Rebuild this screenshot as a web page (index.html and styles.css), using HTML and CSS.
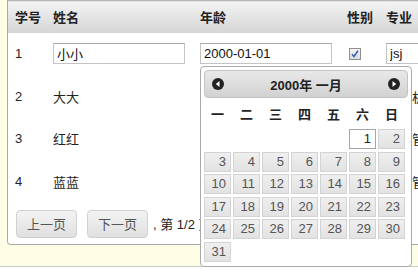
FILE: index.html
```html
<!DOCTYPE html>
<html lang="zh-CN">
<head>
    <meta charset="UTF-8">
    <title>学生列表</title>
    <link rel="stylesheet" href="styles.css">
</head>
<body>

    <div class="page">
        <div class="panel">
            <table class="grid">
                <colgroup>
                    <col class="c-id">
                    <col class="c-name">
                    <col class="c-age">
                    <col class="c-sex">
                    <col class="c-major">
                </colgroup>
                <thead>
                    <tr><th>学号</th><th>姓名</th><th>年龄</th><th>性别</th><th>专业</th></tr>
                </thead>
                <tbody>
                    <tr>
                        <td>1</td>
                        <td><input class="field" type="text" value="小小"></td>
                        <td><input class="field" type="text" value="2000-01-01"></td>
                        <td>
                            <span class="check">
                                <svg width="8" height="8" viewBox="0 0 8 8"><path d="M1 4.2 L3 6.5 L7 0.8" fill="none" stroke="#3a63b5" stroke-width="1.6"/></svg>
                            </span>
                        </td>
                        <td><input class="field" type="text" value="jsj"></td>
                    </tr>
                    <tr><td>2</td><td>大大</td><td></td><td></td><td>计算机</td></tr>
                    <tr><td>3</td><td>红红</td><td></td><td></td><td>工商管理</td></tr>
                    <tr><td>4</td><td>蓝蓝</td><td></td><td></td><td>工商管理</td></tr>
                </tbody>
            </table>
            <div class="pager">
                <button class="btn">上一页</button>
                <button class="btn">下一页</button>
                <span class="page-info">, 第 1/2 页</span>
            </div>
        </div>

        <!-- date picker popup for the 年龄 field -->
        <div class="datepicker">
            <div class="dp-head">
                <span class="dp-nav">
                    <svg width="12" height="12" viewBox="0 0 12 12"><circle cx="6" cy="6" r="6" fill="#222"/><path d="M7.5 3 L3.8 6 L7.5 9 Z" fill="#fff"/></svg>
                </span>
                <span class="dp-title">2000年 一月</span>
                <span class="dp-nav">
                    <svg width="12" height="12" viewBox="0 0 12 12"><circle cx="6" cy="6" r="6" fill="#222"/><path d="M4.5 3 L8.2 6 L4.5 9 Z" fill="#fff"/></svg>
                </span>
            </div>
            <div class="dp-week">
                <span>一</span><span>二</span><span>三</span><span>四</span><span>五</span><span>六</span><span>日</span>
            </div>
            <div class="dp-days" id="days"></div>
        </div>
    </div>

    <script>
        // Jan 2000 starts on a Saturday (6th column when week starts on Monday)
        const days = document.getElementById('days');
        for (let i = 0; i < 5; i++) {
            days.appendChild(document.createElement('span'));
        }
        for (let d = 1; d <= 31; d++) {
            const cell = document.createElement('a');
            cell.className = d === 1 ? 'day active' : 'day';
            cell.textContent = d;
            days.appendChild(cell);
        }
    </script>

</body>
</html>
```

FILE: styles.css
```css
body {
    margin: 0;
    font-family: "Liberation Sans", "Noto Sans CJK SC", sans-serif;
    font-size: 13px;
    color: #222;
    background: #fff;
    overflow: hidden;
}

.page {
    position: relative;
    height: 267px;
    padding-left: 7px;
    background: #fefde6;
    border-bottom: 1px solid #c9c9c9;
    box-sizing: border-box;
}

.panel {
    width: 470px;
    height: 245px;
    background: #fff;
    border: 1px solid #a9a9a9;
    border-top: none;
    border-radius: 0 0 0 4px;
    box-sizing: border-box;
}

.grid {
    border-collapse: collapse;
    table-layout: fixed;
    width: 100%;
}

.c-id { width: 45px; }
.c-name { width: 147px; }
.c-age { width: 147px; }
.c-sex { width: 39px; }

.grid th {
    height: 32px;
    padding: 0;
    text-align: left;
    font-weight: bold;
    color: #222;
    background: linear-gradient(#f3f3f3, #d5d5d5);
    border-top: 1px solid #b5b5b5;
    box-sizing: border-box;
}

.grid td {
    height: 42.5px;
    padding: 0;
    white-space: nowrap;
    overflow: hidden;
}

.grid th:first-child,
.grid td:first-child {
    padding-left: 7px;
}

.field {
    width: 132px;
    height: 21px;
    margin: 0;
    padding: 0 3px;
    border: 1px solid #c4c4c4;
    border-top-color: #ababab;
    font: inherit;
    color: #111;
    box-sizing: border-box;
    display: block;
}

.check {
    display: flex;
    align-items: center;
    justify-content: center;
    width: 12px;
    height: 12px;
    margin-left: 2px;
    border: 1px solid #8f8f8f;
    background: linear-gradient(#f4f4f4, #d9d9e2);
    box-sizing: border-box;
}

.pager {
    display: flex;
    align-items: center;
    gap: 10px;
    padding: 7px 0 0 8px;
}

.btn {
    width: 61px;
    height: 28px;
    font: inherit;
    color: #555;
    background: linear-gradient(#f3f3f3, #e0e0e0);
    border: 1px solid #d0d0d0;
    border-radius: 4px;
}

.page-info {
    margin-left: -5px;
    white-space: nowrap;
}

.datepicker {
    position: absolute;
    left: 200px;
    top: 66px;
    width: 212px;
    height: 201px;
    padding: 3px;
    background: #fff;
    border: 1px solid #aaa;
    border-radius: 4px;
    box-sizing: border-box;
}

.dp-head {
    display: flex;
    align-items: center;
    justify-content: space-between;
    height: 28px;
    padding: 0 7px;
    background: linear-gradient(#e9e9e9, #d1d1d1);
    border: 1px solid #c4c4c4;
    border-radius: 4px;
    box-sizing: border-box;
}

.dp-nav {
    display: flex;
}

.dp-title {
    font-weight: bold;
}

.dp-week {
    display: grid;
    grid-template-columns: repeat(7, 27px);
    column-gap: 2px;
    height: 31px;
    align-items: center;
    font-weight: bold;
    text-align: center;
}

.dp-days {
    display: grid;
    grid-template-columns: repeat(7, 27px);
    grid-auto-rows: 20px;
    gap: 2.5px 2px;
}

.day {
    text-align: right;
    padding-right: 4px;
    line-height: 18px;
    color: #555;
    background: linear-gradient(#efefef, #e2e2e2);
    border: 1px solid #d3d3d3;
    box-sizing: border-box;
}

.day.active {
    background: #fff;
    border-color: #a5a5a5;
    color: #222;
}
```
